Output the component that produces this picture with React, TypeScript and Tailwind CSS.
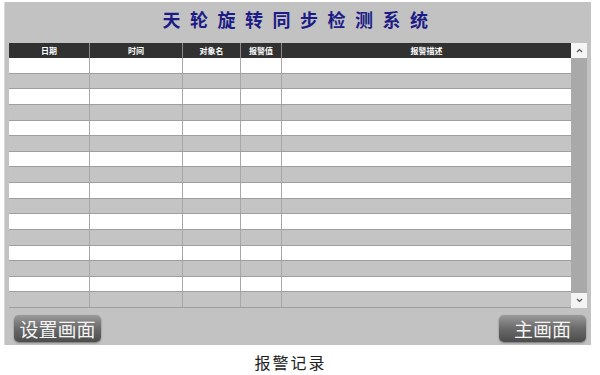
import React from "react";

const cols = [
  { label: "日期", w: "w-[81px]" },
  { label: "时间", w: "w-[93px]" },
  { label: "对象名", w: "w-[58px]" },
  { label: "报警值", w: "w-[41px]" },
  { label: "报警描述", w: "flex-1" },
];

const rows = Array.from({ length: 16 }, (_, i) => i);

const cjk = { fontFamily: '"Noto Sans CJK SC", sans-serif' };

const Chevron = ({ up }: { up?: boolean }) => (
  <svg width="7" height="5" viewBox="0 0 7 5">
    <path
      d={up ? "M1 4 L3.5 1.5 L6 4" : "M1 1 L3.5 3.5 L6 1"}
      fill="none"
      stroke="#555"
      strokeWidth="1.2"
    />
  </svg>
);

const NavButton = ({ text }: { text: string }) => (
  <button
    className="w-[87px] h-[27px] rounded-[5px] bg-gradient-to-b from-[#9a9a9a] via-[#6a6a6a] to-[#4c4c4c] text-[#f4f4f4] text-[19px] leading-none shadow-[0_1px_2px_rgba(0,0,0,0.4)] flex items-center justify-center"
    style={cjk}
  >
    {text}
  </button>
);

export default function App() {
  return (
    <div className="w-[600px] h-[375px] bg-white flex flex-col" style={cjk}>
      <div className="ml-[4px] mt-[2px] w-[587px] h-[343px] bg-[#c2c2c2] border-l border-[#d8d8d8] flex flex-col px-[4px]">
        <div className="h-[41px] flex items-start justify-center pt-[8px] pl-[4px]">
          <h1 className="text-[18px] font-semibold text-[#1c1c86] tracking-[9.5px] leading-none">
            天轮旋转同步检测系统
          </h1>
        </div>
        <div className="flex h-[265px]">
          <div className="w-[562px] flex flex-col">
            <div className="flex h-[15px] bg-[#313131]">
              {cols.map((c, i) => (
                <div
                  key={c.label}
                  className={`${c.w} flex items-center justify-center text-white text-[8px] font-bold ${
                    i < cols.length - 1 ? "border-r border-[#8a8a8a]" : ""
                  }`}
                >
                  {c.label}
                </div>
              ))}
            </div>
            {rows.map((r) => (
              <div
                key={r}
                className={`flex h-[15.625px] border-b border-[#9f9f9f] ${
                  r % 2 === 0 ? "bg-white" : "bg-[#c4c4c4]"
                }`}
              >
                {cols.map((c, i) => (
                  <div
                    key={c.label}
                    className={`${c.w} ${
                      i < cols.length - 1 ? "border-r border-[#a8a8a8]" : ""
                    }`}
                  />
                ))}
              </div>
            ))}
          </div>
          <div className="w-[16px] flex flex-col bg-[#a9a9a9]">
            <div className="h-[15px] bg-[#f4f4f4] flex items-center justify-center">
              <Chevron up />
            </div>
            <div className="flex-1" />
            <div className="h-[15px] bg-[#f4f4f4] flex items-center justify-center">
              <Chevron />
            </div>
          </div>
        </div>
        <div className="flex justify-between mt-[7px] pl-[5px] pr-[1px]">
          <NavButton text="设置画面" />
          <NavButton text="主画面" />
        </div>
      </div>
      <div className="w-[581px] flex justify-center mt-[5px]">
        <span className="text-[16px] text-[#222] tracking-[2px]">报警记录</span>
      </div>
    </div>
  );
}
